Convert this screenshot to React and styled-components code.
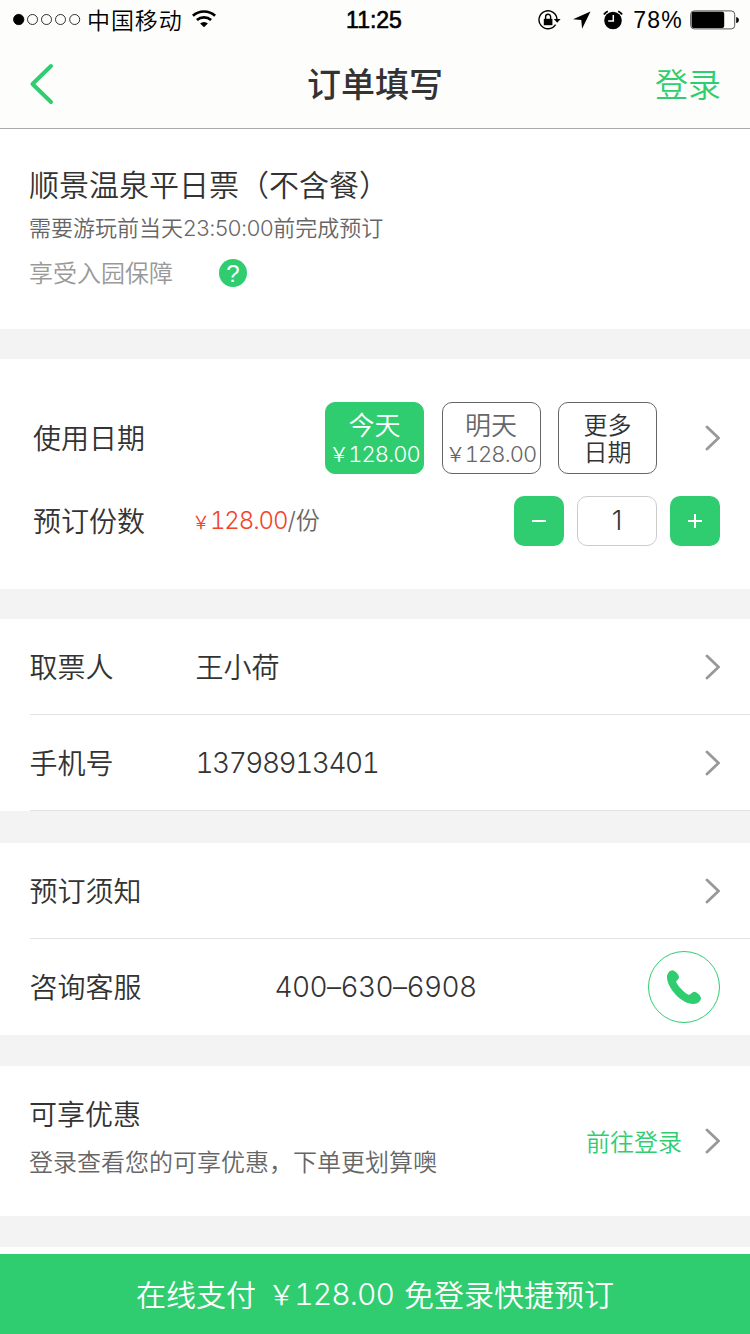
import React from "react";
import styled, { createGlobalStyle } from "styled-components";

const GREEN = "#2fcd70";

const GlobalStyle = createGlobalStyle`
  * {
    box-sizing: border-box;
  }
  body {
    margin: 0;
    background-color: #f3f3f3;
    color: #333;
    font-family: Inter, "Noto Sans CJK SC", sans-serif;
    font-weight: 350;
  }
  button {
    padding: 0;
    border: none;
    background: none;
    font: inherit;
    color: inherit;
  }
  svg {
    display: block;
    flex: none;
  }
`;

const Page = styled.div`
  display: flex;
  flex-direction: column;
  width: 750px;
  height: 1334px;
  overflow: hidden;
`;

const Header = styled.header`
  height: 129px;
  border-bottom: 1px solid #a9a9a9;
  background-color: #fdfdfb;
`;

const StatusBar = styled.div`
  display: grid;
  grid-template-columns: 1fr auto 1fr;
  align-items: center;
  height: 40px;
  padding: 0 10px 0 13px;
  color: #000;
  font-size: 22px;
`;

const StatusGroup = styled.div`
  display: flex;
  align-items: center;
  justify-content: ${({ $end }) => ($end ? "flex-end" : "flex-start")};
`;

const GlyphPair = styled.span`
  display: flex;
  align-items: center;
  gap: 12px;
  margin-left: 11px;
`;

const Carrier = styled.span`
  margin: 0 9px 0 6px;
  padding-top: 2px;
  font-size: 23px;
  line-height: 30px;
  letter-spacing: 0.9px;
`;

const Clock = styled.span`
  margin-right: 5px;
  padding-top: 1px;
  font-family: "Liberation Sans", sans-serif;
  font-size: 23px;
  font-weight: 400;
  -webkit-text-stroke: 0.6px #000;
`;

const Percent = styled.span`
  margin: 0 7px 0 10px;
  padding-top: 1px;
  font-family: "Liberation Sans", sans-serif;
  font-size: 23px;
  font-weight: 400;
  letter-spacing: 1.2px;
`;

const NavBar = styled.nav`
  display: grid;
  grid-template-columns: 1fr auto 1fr;
  align-items: center;
  height: 88px;
  padding: 0 29px;
`;

const NavTitle = styled.h1`
  margin: 0;
  padding-top: 2px;
  font-size: 34px;
  font-weight: 500;
  line-height: 40px;
`;

const LoginButton = styled.button`
  justify-self: end;
  padding-top: 1px;
  color: ${GREEN};
  font-size: 33px;
  line-height: 40px;
`;

const Section = styled.section`
  flex: none;
  height: ${({ $height }) => $height}px;
  margin-bottom: ${({ $gap }) => $gap}px;
  padding: ${({ $padding }) => $padding || "0"};
  background-color: #fff;
`;

const ProductName = styled.h2`
  margin: 0;
  font-size: 30px;
  font-weight: inherit;
  line-height: 40px;
`;

const ProductRule = styled.p`
  margin: 7px 0 0;
  color: #666;
  font-size: 22px;
  line-height: 32px;
`;

const Deadline = styled.span`
  letter-spacing: -0.35px;
`;

const Guarantee = styled.div`
  display: flex;
  align-items: center;
  gap: 46px;
  height: 28px;
  margin-top: 15px;
  color: #999;
  font-size: 24px;
  line-height: 28px;
`;

const GuaranteeText = styled.span`
  padding-top: 2px;
`;

const HelpIcon = styled.span`
  width: 28px;
  height: 28px;
  border-radius: 50%;
  background-color: ${GREEN};
  color: #fff;
  font-family: "Liberation Sans", sans-serif;
  font-size: 24px;
  font-weight: 400;
  line-height: 29px;
  text-align: center;
`;

const OrderRow = styled.div`
  display: flex;
  align-items: center;
  height: ${({ $height }) => $height}px;
  margin-top: ${({ $top }) => $top || 0}px;
`;

const Label = styled.span`
  display: block;
  width: ${({ $width }) => $width}px;
  padding-top: 2px;
  font-size: 28px;
  line-height: 40px;
`;

const DateList = styled.div`
  display: flex;
  gap: 17.5px;
  margin: 0 47px 0 auto;
`;

const DateCard = styled.button`
  display: flex;
  flex-direction: column;
  align-items: center;
  width: 99px;
  height: 72px;
  padding-top: ${({ $plain }) => ($plain ? 9 : 8)}px;
  border: 1px solid ${({ $active }) => ($active ? GREEN : "#666")};
  border-radius: 10px;
  background-color: ${({ $active }) => ($active ? GREEN : "#fff")};
  color: ${({ $active, $plain }) => ($active ? "#fff" : $plain ? "#333" : "#666")};
  font-size: ${({ $plain }) => ($plain ? 24 : 26)}px;
  line-height: ${({ $plain }) => ($plain ? 27 : 29)}px;
  white-space: nowrap;
`;

const DatePrice = styled.span`
  font-size: 22px;
  line-height: 28px;
  font-feature-settings: "tnum";
  letter-spacing: -0.9px;
`;

const UnitPrice = styled.span`
  padding-top: 1px;
  color: #666;
  font-size: 24px;
  line-height: 32px;
`;

const Amount = styled.span`
  color: #f2432a;
  font-feature-settings: "tnum";
  letter-spacing: -1.1px;
`;

const Yen = styled.span`
  margin-right: ${({ $gap }) => $gap}px;
  font-size: ${({ $size }) => $size}px;
`;

const Stepper = styled.div`
  display: flex;
  gap: 13px;
  margin-left: auto;
`;

const StepButton = styled.button`
  display: grid;
  place-items: center;
  width: 50px;
  height: 50px;
  border-radius: 10px;
  background-color: ${GREEN};
`;

const StepValue = styled.span`
  width: 80px;
  height: 50px;
  border: 1px solid #ccc;
  border-radius: 10px;
  font-size: 27px;
  line-height: 48px;
  text-align: center;
`;

const ListRow = styled.div`
  display: flex;
  align-items: center;
  height: 96px;
  margin-left: 30px;
  padding-right: 30px;
  border-bottom: ${({ $border }) => ($border ? "1px solid #e2e2e2" : "none")};

  ${Label} {
    margin-left: -0.5px;
  }
`;

const RowValue = styled.span`
  flex: 1;
  padding-top: ${({ $number }) => ($number ? 0 : 2)}px;
  font-size: 28px;
  line-height: 40px;
  font-feature-settings: "tnum";
  letter-spacing: ${({ $spacing }) => $spacing || 0}px;
`;

const PhoneButton = styled.button`
  display: grid;
  place-items: center;
  width: 72px;
  height: 72px;
  border: 1px solid ${GREEN};
  border-radius: 50%;
`;

const Discount = styled.div`
  display: flex;
  align-items: center;
  height: 150px;
  padding: 0 30px 0 29px;
`;

const DiscountText = styled.div`
  flex: 1;
  padding-bottom: 8px;
`;

const DiscountHint = styled.p`
  margin: 10px 0 0;
  color: #666;
  font-size: 24px;
  line-height: 36px;
`;

const DiscountLink = styled.a`
  margin-right: 22px;
  padding-top: 3px;
  color: ${GREEN};
  font-size: 24px;
  line-height: 34px;
`;

const PayBar = styled.footer`
  flex: none;
  display: flex;
  align-items: center;
  justify-content: center;
  height: 87px;
  padding-top: 2px;
  border-top: 7px solid #fff;
  background-color: ${GREEN};
  color: #fff;
  font-size: 30px;
  line-height: 40px;
`;

const PayAmount = styled.span`
  margin: 0 10px 0 12px;
  font-feature-settings: "tnum";
  letter-spacing: -0.9px;
`;

const ChevronRight = () => (
  <svg width="16" height="26" viewBox="0 0 16 26" fill="none" stroke="#999" strokeWidth="2.8">
    <path d="M3 2 14.5 13 3 24" strokeLinecap="round" />
  </svg>
);

const BackIcon = () => (
  <svg width="26" height="42" viewBox="0 0 26 42" fill="none" stroke={GREEN} strokeWidth="4">
    <path d="M22 3 3.5 21 22 39" strokeLinecap="round" strokeLinejoin="round" />
  </svg>
);

const SignalDots = () => (
  <svg width="68" height="14" viewBox="0 0 68 14" fill="none" stroke="#000" strokeWidth="0.8">
    <circle cx="5.7" cy="6.5" r="5.2" fill="#000" />
    {[19.5, 33.5, 47.5, 61.7].map(x => (
      <circle key={x} cx={x} cy="6.5" r="5" />
    ))}
  </svg>
);

const WifiIcon = () => (
  <svg width="24" height="20" viewBox="0 0 24 20" fill="none" stroke="#000" strokeWidth="2.7">
    <path d="M.9 5.8a16.5 16.5 0 0 1 22.2 0M4.9 10.1a10.8 10.8 0 0 1 14.2 0" />
    <path d="M12 17.3 8.1 13.6a5.5 5.5 0 0 1 7.8 0z" fill="#000" stroke="none" />
  </svg>
);

const LockIcon = () => (
  <svg width="24" height="20" viewBox="0 0 24 20" fill="none" stroke="#000" strokeWidth="1.4">
    <path d="M17.6 14.6A9 9 0 1 1 19 9.500" />
    <path d="M15.8 9h6.8L19.2 12.8z" fill="#000" stroke="none" />
    <rect x="5.8" y="8.8" width="8.6" height="6.4" fill="#000" stroke="none" />
    <path d="M7.6 9V6.8a2.500 2.500 0 0 1 5 0V9" />
  </svg>
);

const LocationIcon = () => (
  <svg width="18" height="18" viewBox="0 0 18 18">
    <path d="M17.500.5 0 8.300l8.300.8.8 8.600z" />
  </svg>
);

const AlarmIcon = () => (
  <svg width="20" height="20" viewBox="0 0 20 20" fill="none">
    <circle cx="10" cy="10.500" r="8.800" fill="#000" />
    <path d="M10.300 5v6H5.200" stroke="#fff" strokeWidth="1.500" />
    <path d="M.9 4.600A11 11 0 0 1 4.800 1.200M15.200 1.200a11 11 0 0 1 3.900 3.400" stroke="#000" strokeWidth="1.800" />
  </svg>
);

const BatteryIcon = () => (
  <svg width="50" height="20" viewBox="0 0 50 20">
    <rect x="0.7" y="0.9" width="44" height="18" rx="3.5" fill="none" stroke="#555" strokeWidth="1" />
    <rect x="1.6" y="1.8" width="32.6" height="16.2" rx="2" />
    <path d="M46.200 7c3.600.6 3.600 5.600 0 6z" />
  </svg>
);

const PhoneIcon = () => (
  <svg width="36" height="36" viewBox="0 0 36 36" fill={GREEN}>
    <path d="M1 8C1 4 4.200 1.200 6.400 1.200 8.800 1.200 13 5.500 13 8 13 10.500 10.300 11.200 10.300 13 10.300 15.500 20.300 25.800 23 25.800 25 25.800 25.800 22.700 28.500 22.700 30.500 22.700 35 26.800 35 29 35 32 31.500 35 27.500 35 15 35 1 18.500 1 8Z" />
  </svg>
);

const DATES = [
  { name: "今天", price: "128.00", active: true },
  { name: "明天", price: "128.00" },
];

function App() {
  return (
    <Page>
      <GlobalStyle />
      <Header>
        <StatusBar>
          <StatusGroup>
            <SignalDots />
            <Carrier>中国移动</Carrier>
            <WifiIcon />
          </StatusGroup>
          <Clock>11:25</Clock>
          <StatusGroup $end>
            <LockIcon />
            <GlyphPair>
              <LocationIcon />
              <AlarmIcon />
            </GlyphPair>
            <Percent>78%</Percent>
            <BatteryIcon />
          </StatusGroup>
        </StatusBar>
        <NavBar>
          <BackIcon />
          <NavTitle>订单填写</NavTitle>
          <LoginButton>登录</LoginButton>
        </NavBar>
      </Header>

      <Section $height={200} $gap={30} $padding="36px 29px 0">
        <ProductName>顺景温泉平日票（不含餐）</ProductName>
        <ProductRule>
          需要游玩前当天<Deadline>23:50:00</Deadline>前完成预订
        </ProductRule>
        <Guarantee>
          <GuaranteeText>享受入园保障</GuaranteeText>
          <HelpIcon>?</HelpIcon>
        </Guarantee>
      </Section>

      <Section $height={230} $gap={30} $padding="43px 30px 0 33px">
        <OrderRow $height={72}>
          <Label>使用日期</Label>
          <DateList>
            {DATES.map(({ name, price, active }) => (
              <DateCard key={name} $active={active}>
                {name}
                <DatePrice>
                  <Yen $size={20} $gap={0}>
                    ￥
                  </Yen>
                  {price}
                </DatePrice>
              </DateCard>
            ))}
            <DateCard $plain>
              <span>更多</span>
              <span>日期</span>
            </DateCard>
          </DateList>
          <ChevronRight />
        </OrderRow>
        <OrderRow $height={50} $top={22}>
          <Label $width={159}>预订份数</Label>
          <UnitPrice>
            <Amount>
              <Yen $size={18} $gap={1}>
                ￥
              </Yen>
              128.00
            </Amount>
            /份
          </UnitPrice>
          <Stepper>
            <StepButton>
              <svg width="16" height="16" stroke="#fff" strokeWidth="2">
                <path d="M1 8h14" />
              </svg>
            </StepButton>
            <StepValue>1</StepValue>
            <StepButton>
              <svg width="16" height="16" stroke="#fff" strokeWidth="2">
                <path d="M1 8h14M8 1v14" />
              </svg>
            </StepButton>
          </Stepper>
        </OrderRow>
      </Section>

      <Section $height={192} $gap={32}>
        <ListRow $border>
          <Label $width={166}>取票人</Label>
          <RowValue>王小荷</RowValue>
          <ChevronRight />
        </ListRow>
        <ListRow $border>
          <Label $width={166}>手机号</Label>
          <RowValue $number $spacing={-1.5}>13798913401</RowValue>
          <ChevronRight />
        </ListRow>
      </Section>

      <Section $height={192} $gap={31}>
        <ListRow $border>
          <Label $width={245}>预订须知</Label>
          <RowValue />
          <ChevronRight />
        </ListRow>
        <ListRow>
          <Label $width={245}>咨询客服</Label>
          <RowValue $number $spacing={-0.6}>400–630–6908</RowValue>
          <PhoneButton>
            <PhoneIcon />
          </PhoneButton>
        </ListRow>
      </Section>

      <Section $height={150} $gap={31}>
        <Discount>
          <DiscountText>
            <Label>可享优惠</Label>
            <DiscountHint>登录查看您的可享优惠，下单更划算噢</DiscountHint>
          </DiscountText>
          <DiscountLink>前往登录</DiscountLink>
          <ChevronRight />
        </Discount>
      </Section>

      <PayBar>
        在线支付
        <PayAmount>
          <Yen $size={27} $gap={0}>
            ￥
          </Yen>
          128.00
        </PayAmount>
        免登录快捷预订
      </PayBar>
    </Page>
  );
}

export default App;
